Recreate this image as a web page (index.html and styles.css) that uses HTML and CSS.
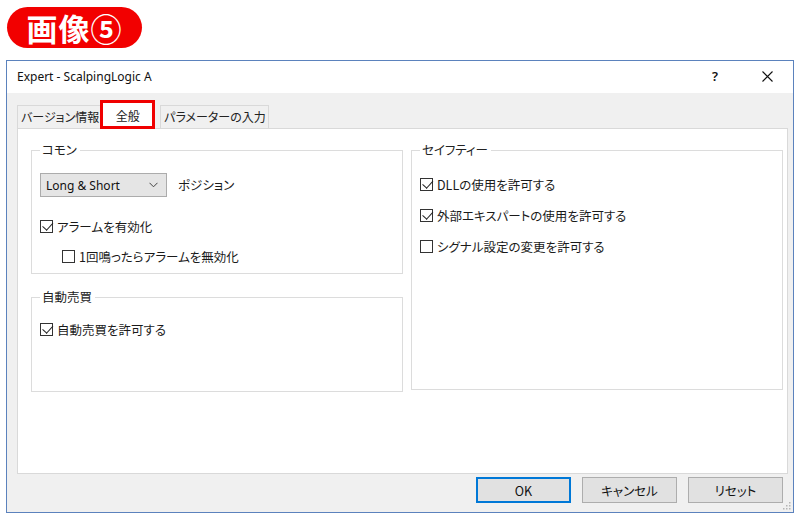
FILE: index.html
```html
<!DOCTYPE html>
<html lang="ja">
<head>
  <meta charset="UTF-8" />
  <title>Expert - ScalpingLogic A</title>
  <link rel="stylesheet" href="styles.css">
</head>
<body>
  <div class="badge">画像⑤</div>

  <div class="dialog">
    <div class="titlebar">
      <span class="title">Expert - ScalpingLogic A</span>
      <span class="help">?</span>
      <span class="close">
        <svg width="11" height="11" viewBox="0 0 11 11"><path d="M0.5 0.5 L10.5 10.5 M10.5 0.5 L0.5 10.5" stroke="#111" stroke-width="1.1" fill="none"/></svg>
      </span>
    </div>

    <div class="dialog-body">
      <div class="tabs">
        <div class="tab">バージョン情報</div>
        <div class="tab active">全般</div>
        <div class="tab">パラメーターの入力</div>
      </div>

      <div class="panel">
        <div class="col">
          <fieldset class="group common">
            <legend>コモン</legend>
            <div class="select-row">
              <div class="select">
                <span>Long &amp; Short</span>
                <svg width="9" height="6" viewBox="0 0 9 6"><path d="M0.5 0.8 L4.5 4.8 L8.5 0.8" stroke="#444" stroke-width="1" fill="none"/></svg>
              </div>
              <span class="label">ポジション</span>
            </div>
            <div class="check-row"><span class="cb on"></span>アラームを有効化</div>
            <div class="check-row sub"><span class="cb"></span>1回鳴ったらアラームを無効化</div>
          </fieldset>

          <fieldset class="group trade">
            <legend>自動売買</legend>
            <div class="check-row"><span class="cb on"></span>自動売買を許可する</div>
          </fieldset>
        </div>

        <fieldset class="group safety">
          <legend>セイフティー</legend>
          <div class="check-row"><span class="cb on"></span>DLLの使用を許可する</div>
          <div class="check-row"><span class="cb on"></span>外部エキスパートの使用を許可する</div>
          <div class="check-row"><span class="cb"></span>シグナル設定の変更を許可する</div>
        </fieldset>
      </div>

      <div class="buttons">
        <button class="btn default">OK</button>
        <button class="btn">キャンセル</button>
        <button class="btn">リセット</button>
      </div>
    </div>

    <svg class="grip" width="9" height="9" viewBox="0 0 9 9">
      <rect x="7" y="1" width="1.5" height="1.5" fill="#b5b5b5"/>
      <rect x="4" y="4" width="1.5" height="1.5" fill="#b5b5b5"/>
      <rect x="7" y="4" width="1.5" height="1.5" fill="#b5b5b5"/>
      <rect x="1" y="7" width="1.5" height="1.5" fill="#b5b5b5"/>
      <rect x="4" y="7" width="1.5" height="1.5" fill="#b5b5b5"/>
      <rect x="7" y="7" width="1.5" height="1.5" fill="#b5b5b5"/>
    </svg>
  </div>
</body>
</html>
```

FILE: styles.css
```css
/* page */
html, body {
  margin: 0;
  padding: 0;
  background: #fff;
  font-family: "Noto Sans CJK JP", "Noto Sans", sans-serif;
  color: #1a1a1a;
}

/* red label above the window */
.badge {
  margin: 7px 0 0 7px;
  width: 135px;
  height: 41px;
  border-radius: 21px;
  background: #f20000;
  color: #fff;
  font-weight: 700;
  font-size: 31px;
  line-height: 41px;
  text-align: center;
  letter-spacing: 1px;
}

/* window frame */
.dialog {
  position: relative;
  margin: 12px 0 0 6px;
  width: 788px;
  height: 453px;
  box-sizing: border-box;
  border: 1px solid #5b82bd;
  background: #f0f0f0;
}

.titlebar {
  height: 32px;
  background: #fff;
  display: flex;
  align-items: center;
  padding-left: 10px;
  font-family: "Noto Sans", sans-serif;
  font-size: 12px;
  color: #111;
}
.titlebar .title {
  flex: 1;
  padding-bottom: 1px;
}
.titlebar .help {
  width: 50px;
  font-size: 13px;
  font-weight: 600;
  padding-bottom: 2px;
}
.titlebar .close {
  width: 31px;
  display: flex;
  align-items: center;
  padding-bottom: 1px;
}

.dialog-body {
  padding: 8px 5px 0 10px;
  font-size: 12.5px;
  font-feature-settings: "palt";
}

/* tabs */
.tabs {
  display: flex;
  align-items: flex-end;
  height: 27px;
}
.tab {
  height: 23px;
  box-sizing: border-box;
  border: 1px solid #d9d9d9;
  border-bottom: none;
  background: #f0f0f0;
  padding: 0 3px;
  line-height: 22px;
  font-size: 12px;
  white-space: nowrap;
  color: #222;
}
.tab.active {
  position: relative;
  z-index: 1;
  height: 27px;
  width: 53px;
  margin: 0 -1px 0 -2px;
  background: #fff;
  line-height: 28px;
  text-align: center;
  padding: 0;
  outline: 3px solid #f00000;
  outline-offset: -2px;
}
.tab:last-child {
  margin-left: 7px;
  padding: 0 2px 0 3px;
}

/* tab page */
.panel {
  height: 346px;
  box-sizing: border-box;
  border: 1px solid #d9d9d9;
  background: #fff;
  padding: 13px 4px 0 13px;
  display: flex;
  gap: 8px;
  align-items: flex-start;
}
.col {
  display: flex;
  flex-direction: column;
  gap: 15px;
}

.group {
  margin: 0;
  width: 372px;
  box-sizing: border-box;
  border: 1px solid #dcdcdc;
  padding: 0 8px;
  min-width: 0;
}
.group legend {
  padding: 0 3px 0 2px;
  line-height: 16px;
  color: #222;
}
.group.common {
  height: 132px;
  padding-top: 15px;
}
.group.trade {
  height: 103px;
  padding-top: 16px;
}
.group.safety {
  height: 248px;
  padding-top: 18px;
  display: flex;
  flex-direction: column;
  gap: 15px;
}

/* combo box */
.select-row {
  display: flex;
  align-items: center;
  gap: 11px;
}
.select {
  width: 127px;
  height: 24px;
  box-sizing: border-box;
  border: 1px solid #acacac;
  background: #e5e5e5;
  display: flex;
  align-items: center;
  justify-content: space-between;
  padding: 0 8px 0 5px;
  font-family: "Noto Sans", sans-serif;
  font-size: 12px;
  color: #111;
}
.select-row .label {
  padding-bottom: 2px;
}

/* check boxes */
.check-row {
  display: flex;
  align-items: center;
  height: 16px;
  white-space: nowrap;
  color: #1a1a1a;
}
.common .check-row {
  margin-top: 21px;
}
.common .check-row.sub {
  margin-top: 14px;
  margin-left: 22px;
}
.cb {
  width: 13px;
  height: 13px;
  box-sizing: border-box;
  border: 1px solid #333;
  background: #fff;
  margin-right: 4px;
  position: relative;
  flex: none;
}
.cb.on::after {
  content: "";
  position: absolute;
  left: 3.5px;
  top: -0.5px;
  width: 4.5px;
  height: 8.5px;
  border: solid #222;
  border-width: 0 1.3px 1.3px 0;
  transform: rotate(42deg);
}

/* buttons */
.buttons {
  display: flex;
  justify-content: flex-end;
  gap: 11px;
  margin-top: 3px;
  padding-right: 5px;
}
.btn {
  width: 95px;
  height: 26px;
  box-sizing: border-box;
  border: 1px solid #adadad;
  background: #e1e1e1;
  font-family: "Noto Sans CJK JP", "Noto Sans", sans-serif;
  font-size: 12.5px;
  font-feature-settings: "palt";
  color: #111;
  padding: 0;
}
.btn.default {
  border: 2px solid #0078d7;
}

.grip {
  position: absolute;
  right: 2px;
  bottom: 2px;
}
```
